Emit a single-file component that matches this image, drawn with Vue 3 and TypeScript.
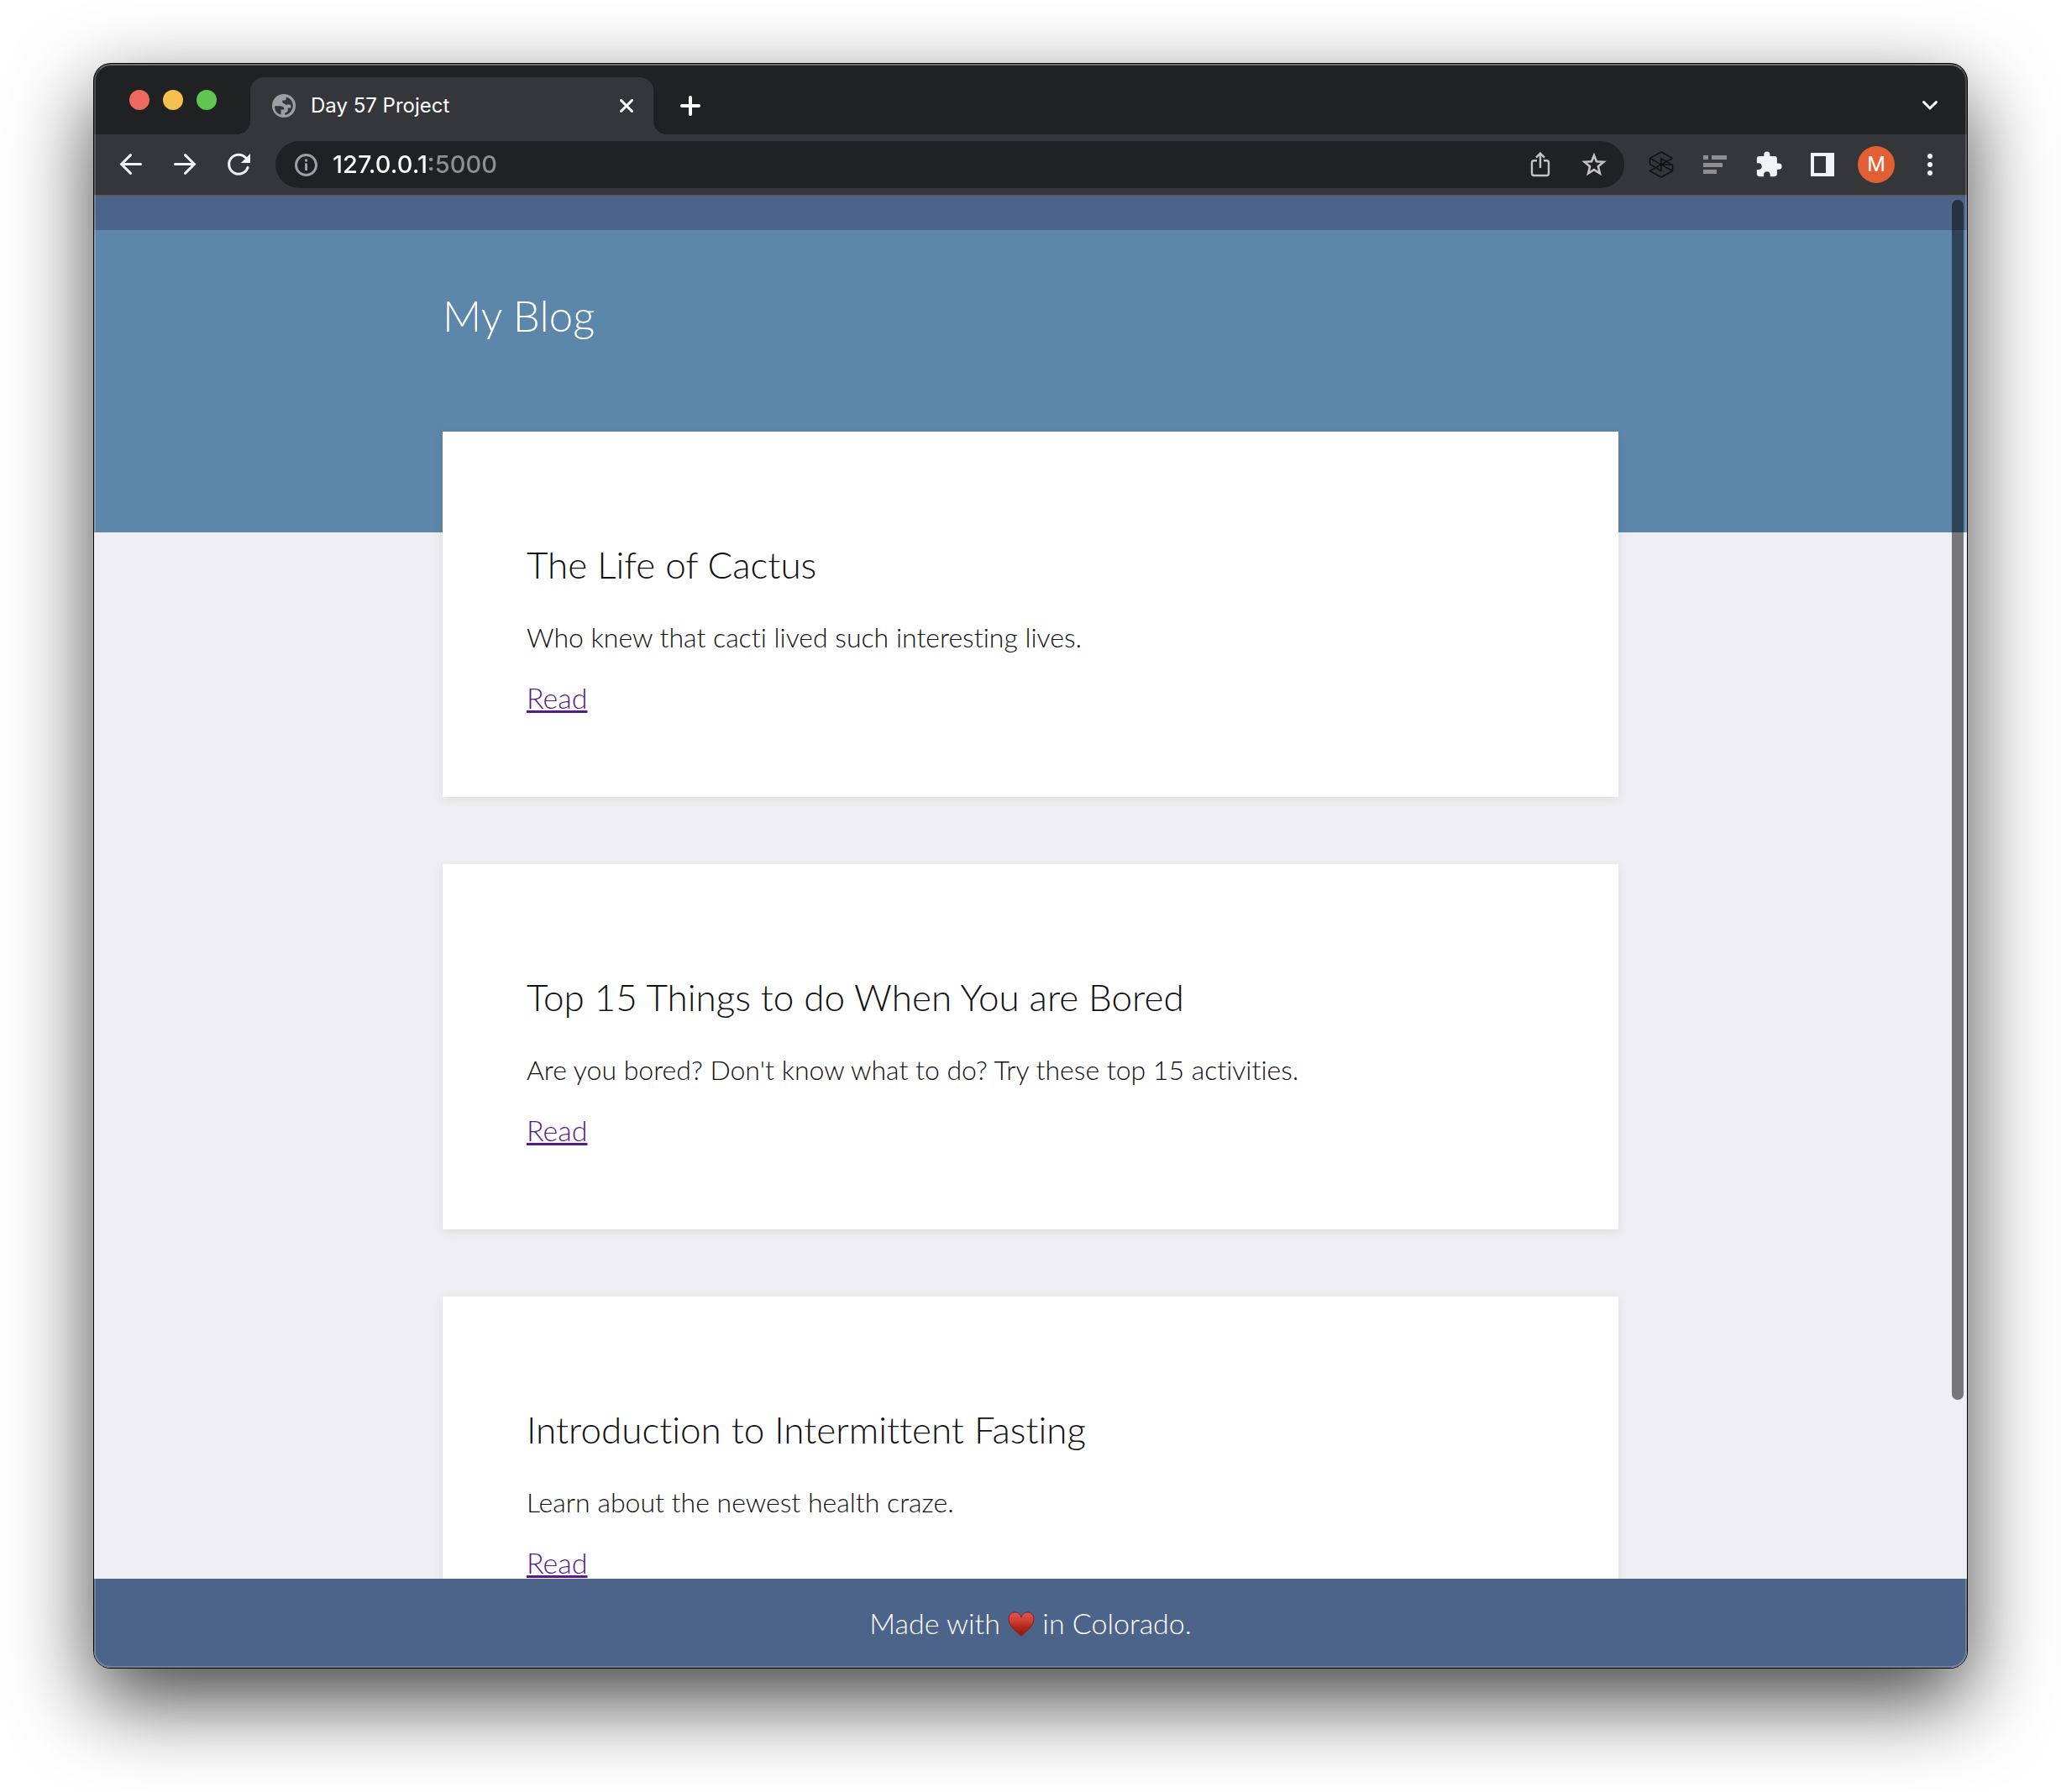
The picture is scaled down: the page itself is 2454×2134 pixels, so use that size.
<script setup lang="ts">
import { ref } from 'vue'

interface Post {
  id: number
  title: string
  subtitle: string
}

const address = ref('127.0.0.1:5000')

const posts: Post[] = [
  { id: 1, title: 'The Life of Cactus', subtitle: 'Who knew that cacti lived such interesting lives.' },
  {
    id: 2,
    title: 'Top 15 Things to do When You are Bored',
    subtitle: "Are you bored? Don't know what to do? Try these top 15 activities.",
  },
  { id: 3, title: 'Introduction to Intermittent Fasting', subtitle: 'Learn about the newest health craze.' },
]
</script>

<template>
  <div class="desktop">
    <div class="window">
      <div class="tab-strip">
        <div class="lights">
          <button class="light red" aria-label="Close window"></button>
          <button class="light yellow" aria-label="Minimise window"></button>
          <button class="light green" aria-label="Zoom window"></button>
        </div>
        <div class="tab">
          <svg class="favicon" width="28" height="28" viewBox="0 0 28 28" aria-hidden="true">
            <circle cx="14" cy="14" r="14" fill="#9aa0a6" />
            <path
              d="M3.2 14.2H10.4Q14.4 14.6 14.4 18.6H10.6V24.6C5.2 23.2 2.8 18.8 3.2 14.2Z"
              fill="#35363a"
            />
            <path
              d="M16.8 3.4C22 4.8 25 9.2 24.8 14.4C24.3 19.8 20.4 24 15.2 24.8V22.4Q18.8 22.4 18.8 18.6V16.6H22.4V13.8Q21.6 12 18.6 12.2Q17.2 14 14.6 11.6Q12.2 11 12.2 9.4V7.4H15.6Q16.8 7 16.8 3.4Z"
              fill="#35363a"
            />
          </svg>
          <span class="tab-title">Day 57 Project</span>
          <button class="tab-close" aria-label="Close tab">
            <svg width="16" height="16" viewBox="0 0 16 16">
              <path d="M1.5 1.5L14.5 14.5M14.5 1.5L1.5 14.5" stroke="#fff" stroke-width="3" stroke-linecap="round" />
            </svg>
          </button>
        </div>
        <button class="new-tab" aria-label="New tab">
          <svg width="24" height="24" viewBox="0 0 24 24">
            <path d="M12 2V22M2 12H22" stroke="#fff" stroke-width="4" stroke-linecap="round" />
          </svg>
        </button>
        <button class="tab-search" aria-label="Search tabs">
          <svg width="18" height="12" viewBox="0 0 18 12">
            <path d="M1.6 1.6L9 9L16.4 1.6" fill="none" stroke="#fff" stroke-width="3" stroke-linecap="round" />
          </svg>
        </button>
      </div>

      <div class="toolbar">
        <button class="tool" aria-label="Back">
          <svg width="28" height="28" viewBox="0 0 28 28" fill="none" stroke="#f1f3f4" stroke-width="3" stroke-linecap="round">
            <path d="M13.5 2.6L2.6 13.5L13.5 24.4M3 13.5H25.5" />
          </svg>
        </button>
        <button class="tool" aria-label="Forward">
          <svg width="28" height="28" viewBox="0 0 28 28" fill="none" stroke="#f1f3f4" stroke-width="3" stroke-linecap="round">
            <path d="M14.5 2.6L25.4 13.5L14.5 24.4M25 13.5H2.5" />
          </svg>
        </button>
        <button class="tool" aria-label="Reload">
          <svg width="28" height="28" viewBox="0 0 28 28">
            <path
              d="M25 17.5A11.5 11.5 0 1 1 22.5 5.8"
              fill="none"
              stroke="#f1f3f4"
              stroke-width="3"
              stroke-linecap="round"
            />
            <path d="M28 1V12H17Z" fill="#f1f3f4" />
          </svg>
        </button>

        <div class="omnibox">
          <button class="tool" aria-label="Site information">
            <svg width="28" height="28" viewBox="0 0 28 28">
              <circle cx="14.5" cy="14.5" r="12" fill="none" stroke="#9aa0a6" stroke-width="3" />
              <path d="M13 7.5H16V10.5H13ZM13 12.5H16V21H13Z" fill="#9aa0a6" />
            </svg>
          </button>
          <input v-model="address" class="address" type="text" aria-label="Address" spellcheck="false" />
          <button class="tool" aria-label="Share">
            <svg width="24" height="30" viewBox="0 0 24 30" fill="none" stroke="#c4c4c4" stroke-width="2.4">
              <path d="M8 10.2H4.4Q2 10.2 2 12.6V25.6Q2 28 4.4 28H19.6Q22 28 22 25.6V12.6Q22 10.2 19.6 10.2H16" />
              <path d="M12 19V2M7 6.6L12 1.6L17 6.6" />
            </svg>
          </button>
          <button class="tool" aria-label="Bookmark this tab">
            <svg width="30" height="30" viewBox="0 0 30 30">
              <path
                d="M15 4L17.900 11.200L26.400 11.800L19.900 17.300L21.900 25.500L15 21.100L8.100 25.500L10.100 17.300L3.600 11.800L12.100 11.200Z"
                fill="none"
                stroke="#c4c4c4"
                stroke-width="2.6"
              />
            </svg>
          </button>
        </div>

        <button class="tool" aria-label="Cube extension">
          <svg width="30" height="34" viewBox="0 0 30 34" fill="none" stroke="#111" stroke-width="1.6">
            <path d="M28.400 9.400L15 2L1.600 9.400V16.600L15 24.400V9.800L28.400 17.600V24.600L15 32L1.600 24.600L28.400 9.400" />
            <path d="M1.600 9.400L28.400 24.600M15 17H28.400" />
          </svg>
        </button>
        <button class="tool" aria-label="Reader extension">
          <svg width="28" height="24" viewBox="0 0 28 24" fill="#8f8f8f">
            <path d="M0 1H6V6H0ZM10 1H28V6H10ZM0 10H23V15H0ZM0 18H16V23H0Z" />
          </svg>
        </button>
        <button class="tool" aria-label="Extensions">
          <svg width="34" height="34" viewBox="0 0 24 24">
            <path
              d="M20.500 11H19V7c0-1.100-.9-2-2-2h-4V3.500a2.500 2.500 0 0 0-5 0V5H4c-1.100 0-1.990.9-1.990 2v3.800H3.500c1.490 0 2.700 1.210 2.700 2.700s-1.210 2.700-2.700 2.700H2V20c0 1.100.9 2 2 2h3.800v-1.500c0-1.490 1.210-2.700 2.700-2.700s2.700 1.210 2.700 2.700V22H17c1.100 0 2-.9 2-2v-4h1.500a2.500 2.500 0 0 0 0-5z"
              fill="#f1f3f4"
            />
          </svg>
        </button>
        <button class="tool" aria-label="Side panel">
          <svg width="28" height="28" viewBox="0 0 28 28">
            <path fill-rule="evenodd" d="M0 0H28V28H0ZM4 4V24H18V4Z" fill="#f1f3f4" />
          </svg>
        </button>
        <button class="tool" aria-label="Profile"><span class="avatar">M</span></button>
        <button class="tool" aria-label="Menu">
          <svg width="6" height="28" viewBox="0 0 6 28" fill="#f1f3f4">
            <circle cx="3" cy="4" r="3" />
            <circle cx="3" cy="14" r="3" />
            <circle cx="3" cy="24" r="3" />
          </svg>
        </button>
      </div>

      <div class="page">
        <div class="strip"></div>
        <div class="content">
          <header class="top">
            <h1 class="blog-name">My Blog</h1>
          </header>
          <main class="posts">
            <article v-for="post in posts" :key="post.id" class="card">
              <h2 class="title">{{ post.title }}</h2>
              <p class="subtitle">{{ post.subtitle }}</p>
              <a class="read" :href="`#post-${post.id}`">Read</a>
            </article>
          </main>
        </div>
        <footer class="footer">
          <p class="made">
            Made with
            <svg class="heart" width="32" height="30" viewBox="0 0 32 30" role="img" aria-label="love">
              <defs>
                <linearGradient id="heart-fill" x1="0" y1="0" x2="0" y2="1">
                  <stop offset="0" stop-color="#dc5a55" />
                  <stop offset="0.35" stop-color="#cf3f36" />
                  <stop offset="0.65" stop-color="#ae2419" />
                  <stop offset="1" stop-color="#93180f" />
                </linearGradient>
              </defs>
              <path
                d="M16 29.400C13 25.500 1 18.500 1 9.300C1 4.200 4.600 1 8.600 1C12.200 1 14.800 3.400 16 7.200C17.200 3.400 19.800 1 23.400 1C27.400 1 31 4.200 31 9.300C31 18.500 19 25.500 16 29.400Z"
                fill="url(#heart-fill)"
                stroke="#8d1f1a"
                stroke-width="1"
              />
            </svg>
            in Colorado.
          </p>
        </footer>
        <div class="scroll-thumb"></div>
      </div>
    </div>
  </div>
</template>

<style>
body {
  margin: 0;
  background: #fff;
}
</style>

<style scoped>
* {
  box-sizing: border-box;
}

button {
  padding: 0;
  border: 0;
  background: none;
  font: inherit;
}

svg {
  display: block;
}

.desktop {
  height: 100vh;
  padding: 76px 112px 148px;
  overflow: hidden;
  font-family: Lato, 'Liberation Sans', sans-serif;
  font-variant-ligatures: none;
}

.window {
  position: relative;
  display: flex;
  flex-direction: column;
  height: 100%;
  overflow: hidden;
  border-radius: 20px;
  background: #202124;
  box-shadow: 0 0 0 1px #000, 0 38px 100px rgba(0, 0, 0, 0.74);
}

/* Light rim drawn over the content along the window edge */
.window::after {
  content: '';
  position: absolute;
  inset: 0;
  border: 2px solid rgba(255, 255, 255, 0.2);
  border-top-color: rgba(255, 255, 255, 0.34);
  border-radius: 20px;
  pointer-events: none;
}

.tab-strip {
  display: flex;
  align-items: flex-end;
  flex: none;
  height: 84px;
  background: #202123;
  font-family: Inter, 'Liberation Sans', sans-serif;
}

.lights {
  display: flex;
  gap: 16px;
  width: 186px;
  padding-left: 42px;
  padding-bottom: 29px;
}

.light {
  width: 24px;
  height: 24px;
  border-radius: 50%;
}

.red {
  background: #ed6a5e;
}

.yellow {
  background: #f5bf4f;
}

.green {
  background: #61c554;
}

.tab {
  position: relative;
  display: flex;
  align-items: center;
  width: 480px;
  height: 68px;
  padding: 0 24px 0 26px;
  border-radius: 16px 16px 0 0;
  background: #35363a;
}

/* Flared feet where the tab meets the toolbar */
.tab::before,
.tab::after {
  content: '';
  position: absolute;
  bottom: 0;
  width: 16px;
  height: 16px;
}

.tab::before {
  right: 100%;
  background: radial-gradient(circle at 0 0, #202123 16px, #35363a 16px);
}

.tab::after {
  left: 100%;
  background: radial-gradient(circle at 100% 0, #202123 16px, #35363a 16px);
}

.tab-title {
  flex: 1;
  margin-left: 18px;
  color: #fff;
  font-size: 24px;
  line-height: 32px;
}

.new-tab {
  margin: 0 auto 22px 32px;
}

.tab-search {
  margin: 0 35px 28px 0;
}

.toolbar {
  display: flex;
  align-items: center;
  flex: none;
  height: 74px;
  padding: 0 12px;
  border-bottom: 2px solid #5c5d60;
  background: #35363a;
  font-family: Inter, 'Liberation Sans', sans-serif;
}

.tool {
  display: flex;
  align-items: center;
  justify-content: center;
  flex: none;
  width: 64px;
  height: 56px;
}

.omnibox {
  display: flex;
  align-items: center;
  flex: 1;
  height: 56px;
  margin: 0 12px;
  padding: 0 4px;
  border-radius: 28px;
  background: #202123;
}

/* The host is bright and the port is dimmed */
.address {
  flex: 1;
  min-width: 0;
  height: 40px;
  padding: 0;
  border: 0;
  outline: 0;
  background: linear-gradient(90deg, #fff 116px, #8f9094 116px);
  background-clip: text;
  -webkit-background-clip: text;
  color: #fff;
  -webkit-text-fill-color: transparent;
  font: 500 29px/40px Inter, 'Liberation Sans', sans-serif;
}

.avatar {
  width: 44px;
  height: 44px;
  border-radius: 50%;
  background: #e25f33;
  color: #fff;
  font-size: 24px;
  line-height: 44px;
  text-align: center;
}

.page {
  position: relative;
  display: flex;
  flex-direction: column;
  flex: 1;
  min-height: 0;
  background: #eeeef3;
}

.strip {
  flex: none;
  height: 40px;
  background: #4c6489;
}

.content {
  flex: 1;
  min-height: 0;
  overflow: hidden;
}

.top {
  height: 360px;
  padding: 72px 24px 0;
  background: #5d87aa;
}

.blog-name {
  max-width: 1400px;
  margin: 0 auto;
  color: #fff;
  font-size: 51px;
  font-weight: 300;
  line-height: 60px;
}

.posts {
  display: flex;
  flex-direction: column;
  gap: 80px;
  max-width: 1400px;
  margin: -120px auto 0;
}

.card {
  padding: 133px 100px 98px;
  background: #fff;
  box-shadow: 0 3px 12px rgba(0, 0, 0, 0.08);
}

.title,
.subtitle,
.read {
  font-weight: 300;
}

.title {
  margin: 0 0 44px;
  color: #111;
  font-size: 44px;
  line-height: 50px;
}

.subtitle {
  margin: 0 0 34px;
  color: #111;
  font-size: 32px;
  line-height: 36px;
}

.read {
  display: block;
  width: fit-content;
  color: #551a8b;
  font-size: 34px;
  line-height: 40px;
  text-decoration-thickness: 3px;
  text-underline-offset: 2px;
  text-decoration-skip-ink: none;
}

.footer {
  display: flex;
  align-items: center;
  justify-content: center;
  flex: none;
  height: 106px;
  background: #4c6489;
}

.made {
  margin: 0;
  color: #fff;
  font-size: 34px;
  font-weight: 300;
  line-height: 40px;
}

.heart {
  display: inline-block;
  vertical-align: -3px;
}

.scroll-thumb {
  position: absolute;
  top: 4px;
  right: 4px;
  width: 14px;
  height: 1429px;
  border-radius: 7px;
  background: rgba(0, 0, 0, 0.5);
}
</style>
